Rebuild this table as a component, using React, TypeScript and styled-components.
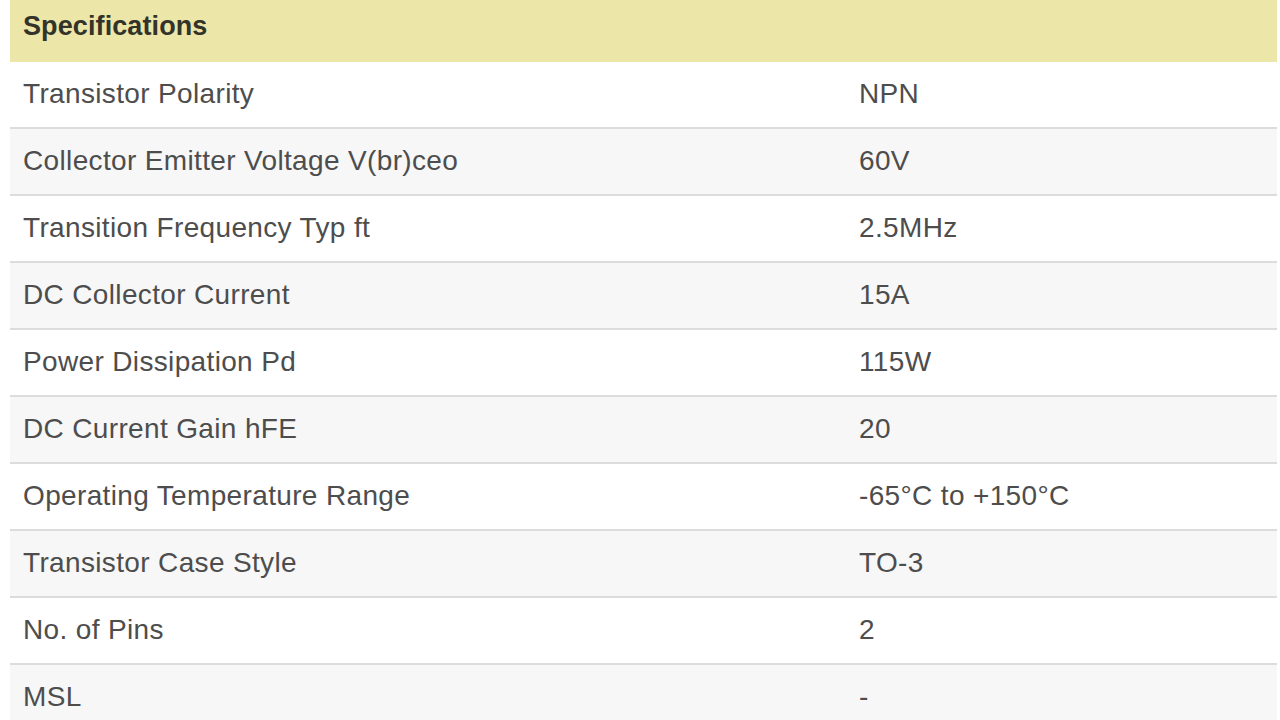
import React from "react";
import styled, { createGlobalStyle } from "styled-components";

const Global = createGlobalStyle`
  html, body { margin: 0; padding: 0; background: #ffffff; }
  body { font-family: "Liberation Sans", Arial, sans-serif; }
`;

const Table = styled.section`
  margin-left: 10px;
  width: 1267px;
  display: flex;
  flex-direction: column;
`;

const Header = styled.h2`
  margin: 0;
  height: 62px;
  box-sizing: border-box;
  padding: 0 13px 10px;
  display: flex;
  align-items: center;
  background: #ece6a8;
  color: #333329;
  font-size: 27px;
  font-weight: bold;
  letter-spacing: 0.1px;
`;

const Row = styled.div<{ $alt: boolean }>`
  height: 67px;
  box-sizing: border-box;
  border-bottom: 2px solid #dcdcdc;
  background: ${(p) => (p.$alt ? "#f7f7f7" : "#ffffff")};
  display: grid;
  grid-template-columns: 836px 1fr;
  align-items: center;
  padding: 0 13px 2px;
  color: #4d4d4d;
  font-size: 28px;
  letter-spacing: 0.35px;
`;

const Cell = styled.span`
  white-space: nowrap;
`;

const specs: [string, string][] = [
  ["Transistor Polarity", "NPN"],
  ["Collector Emitter Voltage V(br)ceo", "60V"],
  ["Transition Frequency Typ ft", "2.5MHz"],
  ["DC Collector Current", "15A"],
  ["Power Dissipation Pd", "115W"],
  ["DC Current Gain hFE", "20"],
  ["Operating Temperature Range", "-65°C to +150°C"],
  ["Transistor Case Style", "TO-3"],
  ["No. of Pins", "2"],
  ["MSL", "-"],
];

export default function App() {
  return (
    <>
      <Global />
      <Table>
        <Header>Specifications</Header>
        {specs.map(([k, v], i) => (
          <Row key={k} $alt={i % 2 === 1}>
            <Cell>{k}</Cell>
            <Cell>{v}</Cell>
          </Row>
        ))}
      </Table>
    </>
  );
}
